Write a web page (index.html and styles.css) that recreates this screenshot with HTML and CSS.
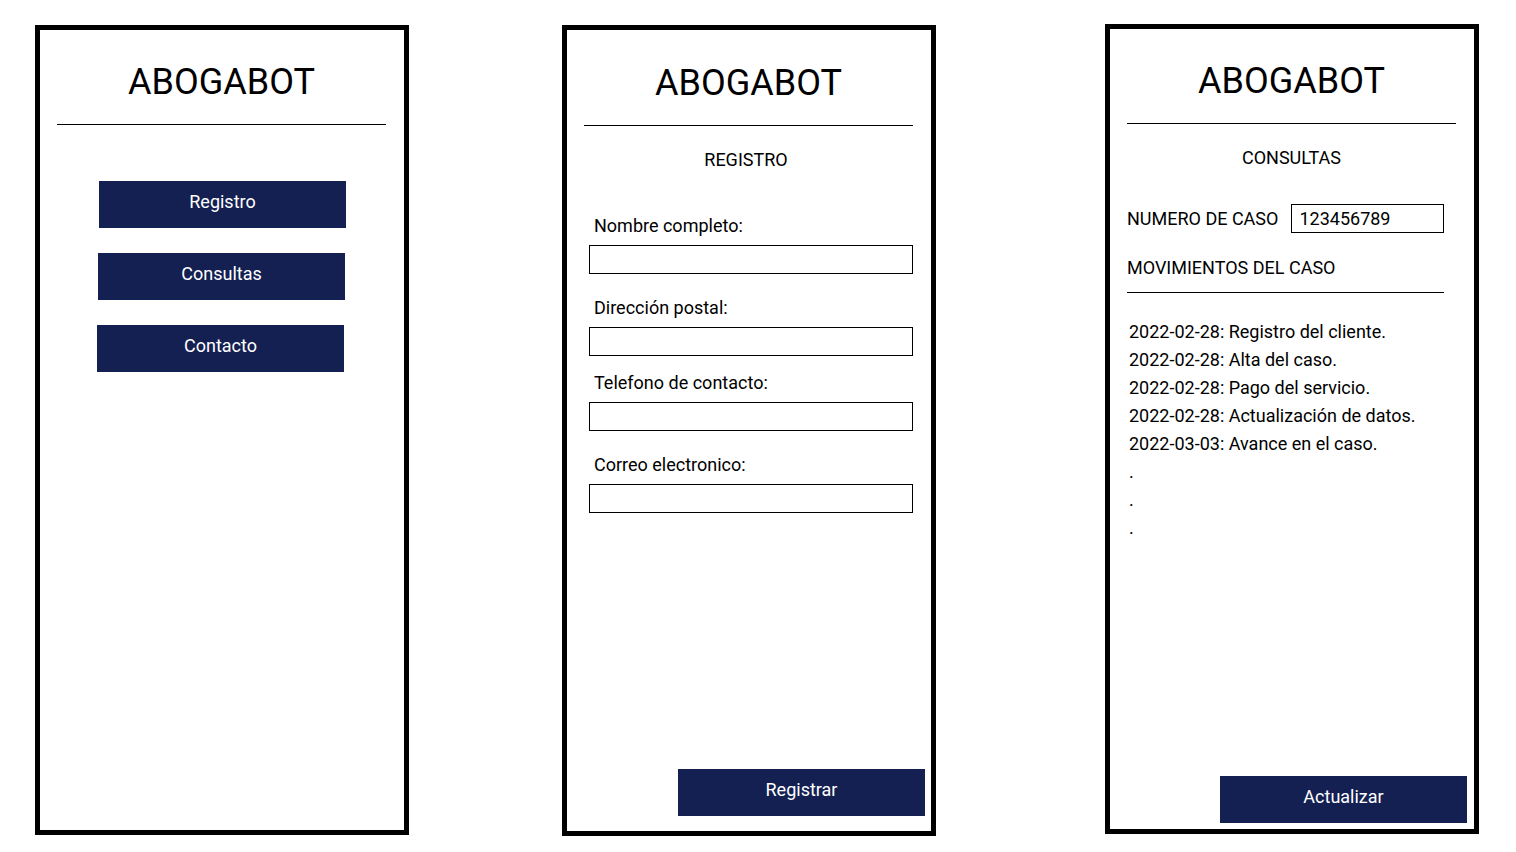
FILE: index.html
```html
<!DOCTYPE html>
<html lang="es">
<head>
    <meta charset="UTF-8">
    <meta name="viewport" content="width=device-width, initial-scale=1.0">
    <title>Abogabot - Pantallas</title>
    <link rel="stylesheet" href="styles.css">
</head>
<body>
    <div class="screens">

        <!-- Pantalla principal -->
        <section class="screen screen-menu">
            <h1 class="title">ABOGABOT</h1>
            <div class="divider"></div>
            <nav class="menu">
                <a class="btn" href="#registro">Registro</a>
                <a class="btn" href="#consultas">Consultas</a>
                <a class="btn" href="#contacto">Contacto</a>
            </nav>
        </section>

        <!-- Registro -->
        <section class="screen screen-form" id="registro">
            <h1 class="title">ABOGABOT</h1>
            <div class="divider"></div>
            <h2 class="subtitle subtitle-form">REGISTRO</h2>
            <form class="form">
                <div class="field">
                    <label for="nombre">Nombre completo:</label>
                    <input type="text" id="nombre">
                </div>
                <div class="field">
                    <label for="direccion">Dirección postal:</label>
                    <input type="text" id="direccion">
                </div>
                <div class="field field-near">
                    <label for="telefono">Telefono de contacto:</label>
                    <input type="text" id="telefono">
                </div>
                <div class="field">
                    <label for="correo">Correo electronico:</label>
                    <input type="text" id="correo">
                </div>
            </form>
            <div class="screen-footer footer-form">
                <button class="btn" type="button">Registrar</button>
            </div>
        </section>

        <!-- Consultas -->
        <section class="screen screen-cases" id="consultas">
            <h1 class="title">ABOGABOT</h1>
            <div class="divider"></div>
            <h2 class="subtitle">CONSULTAS</h2>
            <div class="case-row">
                <label class="case-label" for="caso">NUMERO DE CASO</label>
                <input class="case-input" type="text" id="caso" value="123456789">
            </div>
            <div class="section-label">MOVIMIENTOS DEL CASO</div>
            <div class="divider divider-short"></div>
            <ul class="moves">
                <li>2022-02-28: Registro del cliente.</li>
                <li>2022-02-28: Alta del caso.</li>
                <li>2022-02-28: Pago del servicio.</li>
                <li>2022-02-28: Actualización de datos.</li>
                <li>2022-03-03: Avance en el caso.</li>
                <li>.</li>
                <li>.</li>
                <li>.</li>
            </ul>
            <div class="screen-footer footer-cases">
                <button class="btn" type="button">Actualizar</button>
            </div>
        </section>

    </div>
</body>
</html>
```

FILE: styles.css
```css
* {
    box-sizing: border-box;
}
body {
    margin: 0;
    background-color: #fff;
    color: #000;
    font-family: Roboto, "Liberation Sans", Arial, sans-serif;
}
.screens {
    display: flex;
    align-items: flex-start;
    padding-left: 35px;
}
.screen {
    width: 374px;
    height: 810px;
    border: 5px solid #000;
    padding: 30px 18px 0 17px;
    display: flex;
    flex-direction: column;
}
.screen-menu {
    margin-top: 25px;
}
.screen-form {
    margin-top: 25px;
    margin-left: 153px;
    height: 811px;
    padding-top: 31px;
}
.screen-cases {
    margin-top: 24px;
    margin-left: 169px;
}
.title {
    margin: 0 0 20px;
    font-size: 36px;
    font-weight: 400;
    line-height: 44px;
    text-align: center;
}
.divider {
    height: 1px;
    background-color: #000;
}
.divider-short {
    margin-top: 14px;
    margin-right: 12px;
}
.subtitle {
    margin: 24px 0 0;
    font-size: 18px;
    font-weight: 400;
    line-height: 20px;
    text-align: center;
}
.subtitle-form {
    padding-right: 5px;
}
.btn {
    width: 247px;
    height: 47px;
    display: flex;
    align-items: center;
    justify-content: center;
    padding: 0 0 6px;
    background-color: #142052;
    color: #fff;
    border: 0;
    font-family: inherit;
    font-size: 18px;
    text-decoration: none;
    cursor: pointer;
}
.menu {
    margin-top: 56px;
    display: flex;
    flex-direction: column;
    align-items: center;
    gap: 25px;
}
.menu .btn:first-child {
    margin-left: 2px;
}
.menu .btn:last-child {
    margin-right: 2px;
}

/* formulario de registro */
.form {
    margin-top: 46px;
}
.field {
    margin-top: 24px;
}
.field:first-child {
    margin-top: 0;
}
.field.field-near {
    margin-top: 17px;
}
.field label {
    display: block;
    padding-left: 10px;
    margin-bottom: 9px;
    font-size: 18px;
    line-height: 20px;
}
.field input {
    display: block;
    width: calc(100% - 5px);
    height: 29px;
    margin-left: 5px;
    border: 1px solid #000;
    background: #fff;
    outline: none;
}

/* consultas */
.case-row {
    margin-top: 36px;
    display: flex;
    align-items: center;
}
.case-label {
    font-size: 18px;
    line-height: 20px;
}
.case-input {
    width: 153px;
    height: 29px;
    margin-left: 13px;
    padding: 0 7px;
    border: 1px solid #000;
    background: #fff;
    color: #000;
    font-family: inherit;
    font-size: 18px;
    outline: none;
}
.section-label {
    margin-top: 25px;
    font-size: 18px;
    line-height: 20px;
}
.moves {
    margin: 25px 0 0;
    padding: 0 0 0 2px;
    list-style: none;
    font-size: 18px;
    line-height: 28px;
}

.screen-footer {
    margin-top: auto;
    margin-right: -11px;
    display: flex;
    justify-content: flex-end;
}
.footer-form {
    margin-right: -12px;
    padding-bottom: 15px;
}
.footer-cases {
    padding-bottom: 6px;
}
```
